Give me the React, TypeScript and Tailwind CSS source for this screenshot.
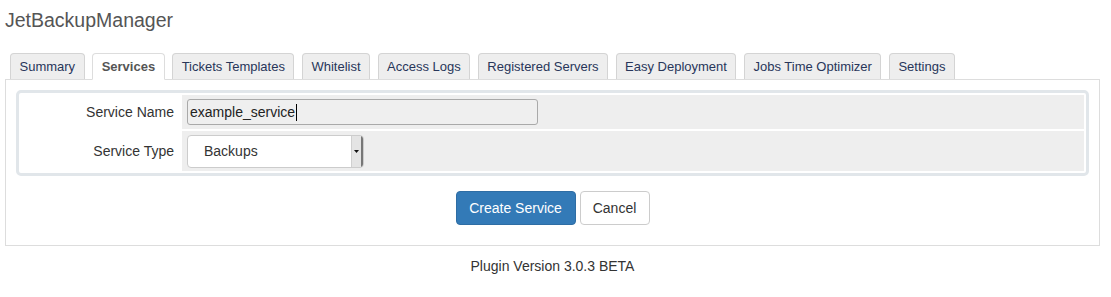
import React from "react";

const tabs = [
  "Summary",
  "Services",
  "Tickets Templates",
  "Whitelist",
  "Access Logs",
  "Registered Servers",
  "Easy Deployment",
  "Jobs Time Optimizer",
  "Settings",
];

export default function App() {
  return (
    <div className="w-[1111px] h-[297px] bg-white text-[#333] font-['Liberation_Sans',Arial,sans-serif] overflow-hidden">
      <div className="pl-[5px] w-[1100px]">
        <h1 className="pt-[8px] text-[19.5px] leading-[24px] text-[#555] font-normal">JetBackupManager</h1>

        <div className="mt-[21px] flex gap-[7.5px] pl-[5px] relative z-10">
          {tabs.map((t) =>
            t === "Services" ? (
              <div
                key={t}
                className="h-[27px] -mb-px px-[8.5px] flex items-center text-[13px] font-bold text-[#555] bg-white border border-[#ddd] border-b-white rounded-t-[4px]"
              >
                {t}
              </div>
            ) : (
              <div
                key={t}
                className="h-[26px] px-[8.5px] flex items-center text-[13px] text-[#28365a] bg-[#eee] border border-[#d4d4d4] border-b-0 rounded-t-[4px]"
              >
                {t}
              </div>
            )
          )}
        </div>

        <div className="w-[1095px] border border-[#ddd] p-[10px]">
          <div className="border-[3px] border-[#e1e6ea] rounded-[5px] p-[2px] flex flex-col gap-[2px] text-[14px]">
            <div className="flex gap-[2px]">
              <div className="w-[159px] flex items-center justify-end pr-[6px]">Service Name</div>
              <div className="flex-1 bg-[#eee] pl-[5px] pt-[4px] pb-[4px]">
                <div className="w-[351px] h-[26px] border border-[#a9a9a9] rounded-[3px] bg-[#efefef] flex items-center pl-[2px] text-[14px] text-[#222]">
                  <span>example_service</span>
                  <span className="w-px h-[17px] bg-black ml-px" />
                </div>
              </div>
            </div>
            <div className="flex gap-[2px]">
              <div className="w-[159px] flex items-center justify-end pr-[6px]">Service Type</div>
              <div className="flex-1 bg-[#eee] pl-[5px] pt-[4px] pb-[3px]">
                <div className="w-[177px] h-[33px] border border-[#ccc] rounded-[4px] bg-white flex items-stretch overflow-hidden">
                  <div className="flex-1 flex items-center pl-[16px] text-[14px] text-[#333]">Backups</div>
                  <div className="w-[12px] bg-[#e4e4e4] border-l border-[#d0d0d0] border-r-2 border-r-[#777] flex items-center justify-center">
                    <svg width="5" height="3" viewBox="0 0 5 3">
                      <path d="M0 0 H5 L2.5 3 Z" fill="#111" />
                    </svg>
                  </div>
                </div>
              </div>
            </div>
          </div>

          <div className="mt-[15px] mb-[10px] flex justify-center gap-[4px] text-[14px]">
            <button className="w-[120px] h-[34px] rounded-[4px] bg-[#337ab7] border border-[#2e6da4] text-white">
              Create Service
            </button>
            <button className="w-[70px] h-[34px] rounded-[4px] bg-white border border-[#ccc] text-[#333]">
              Cancel
            </button>
          </div>
        </div>

        <div className="w-[1095px] mt-[10px] text-center text-[14px] leading-[20px] text-[#333]">
          Plugin Version 3.0.3 BETA
        </div>
      </div>
    </div>
  );
}
